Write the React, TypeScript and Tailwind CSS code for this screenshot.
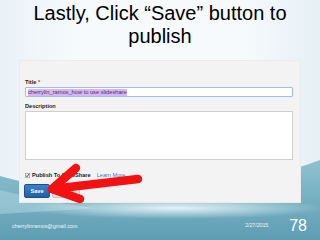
import React from 'react';

function Background() {
  return (
    <svg className="absolute inset-0" width="320" height="240" viewBox="0 0 320 240">
      <defs>
        <linearGradient id="base" x1="0" y1="0" x2="1" y2="0">
          <stop offset="0" stopColor="#eaf2f7" />
          <stop offset="0.25" stopColor="#f6fafc" />
          <stop offset="0.75" stopColor="#f6fafc" />
          <stop offset="1" stopColor="#e6f0f6" />
        </linearGradient>
        <linearGradient id="wave" x1="0" y1="0" x2="0" y2="1">
          <stop offset="0" stopColor="#8fc1d0" />
          <stop offset="1" stopColor="#5e9db3" />
        </linearGradient>
        <radialGradient id="glow" cx="0.5" cy="0.5" r="0.5">
          <stop offset="0" stopColor="#e4f3f7" stopOpacity="1" />
          <stop offset="1" stopColor="#e4f3f7" stopOpacity="0" />
        </radialGradient>
      </defs>
      <rect width="320" height="240" fill="url(#base)" />
      <path d="M0,176 C70,196 200,206 320,160 L320,240 L0,240 Z" fill="url(#wave)" />
      <path d="M0,190 C40,200 70,206 100,208 L0,214 Z" fill="#a8d0dc" opacity="0.6" />
      <ellipse cx="175" cy="208" rx="150" ry="11" fill="url(#glow)" />
    </svg>
  );
}

function Arrow() {
  return (
    <svg className="absolute inset-0 pointer-events-none" width="320" height="240" viewBox="0 0 320 240">
      <g stroke="#f21212" strokeWidth="8.5" strokeLinecap="round" strokeLinejoin="round" fill="none">
        <polyline points="76,168 52,189 80,199" />
        <line x1="52" y1="189" x2="138" y2="179" />
      </g>
    </svg>
  );
}

export default function App() {
  return (
    <div className="relative w-[320px] h-[240px] overflow-hidden font-['Liberation_Sans',Arial,sans-serif]">
      <Background />
      <div className="relative flex flex-col h-full">
        <h1 className="pt-[2px] text-center text-[20px] leading-[23px] text-black">
          Lastly, Click “Save” button to
          <br />
          publish
        </h1>

        <div className="mt-[12px] ml-[19px] w-[282px] h-[143px] bg-[#f3f3f3] border border-[#ebebeb] pl-[5px] pr-[7px] pt-[18px]">
          <div className="h-[6px] leading-[6px] text-[5.6px] font-bold text-[#222]">
            Title <span className="text-[#d22]">*</span>
          </div>
          <div className="mt-[2px] h-[10px] bg-white border border-[#9ebfe6] rounded-[1px] flex items-center pl-[2px]">
            <span className="bg-[#d8b6f4] text-[#4a2a78] text-[5.7px] leading-[7px]">
              cherrylin_ramos_how to use slideshare
            </span>
          </div>
          <div className="mt-[6px] h-[6px] leading-[6px] text-[5.6px] font-bold text-[#222]">
            Description
          </div>
          <div className="mt-[2px] h-[49px] bg-white border border-[#cfcfcf]" />

          <div className="mt-[12px] h-[6px] flex items-center gap-[2px] text-[5.6px] leading-[6px]">
            <svg width="5" height="5" viewBox="0 0 5 5">
              <rect x="0.25" y="0.25" width="4.5" height="4.5" fill="#eee" stroke="#888" strokeWidth="0.5" />
              <path d="M1,2.6 L2,3.8 L4.2,0.8" stroke="#333" strokeWidth="0.8" fill="none" />
            </svg>
            <span className="font-bold text-[#222]">Publish To SlideShare</span>
            <span className="ml-[4px] text-[#3a78c4]">Learn More</span>
          </div>

          <div className="mt-[6px] -ml-[1px] flex gap-[2px]">
            <div className="w-[26px] h-[14px] rounded-[2px] bg-gradient-to-b from-[#3b7fcb] to-[#225fa6] border border-[#1d4f8c] flex items-center justify-center text-white text-[5.6px] font-bold">
              Save
            </div>
            <div className="w-[28px] h-[14px] rounded-[2px] bg-[#e2e2e2] border border-[#c4c4c4]" />
          </div>
        </div>

        <div className="mt-[14px] h-[18px] flex items-center pl-[12px] pr-[13px] text-[#eef7fa]">
          <span className="text-[5.4px]">cherrylinramos@gmail.com</span>
          <span className="ml-auto text-[5.2px]">2/27/2015</span>
          <span className="ml-[21px] text-[16px] leading-[18px] text-white">78</span>
        </div>
      </div>
      <Arrow />
    </div>
  );
}
